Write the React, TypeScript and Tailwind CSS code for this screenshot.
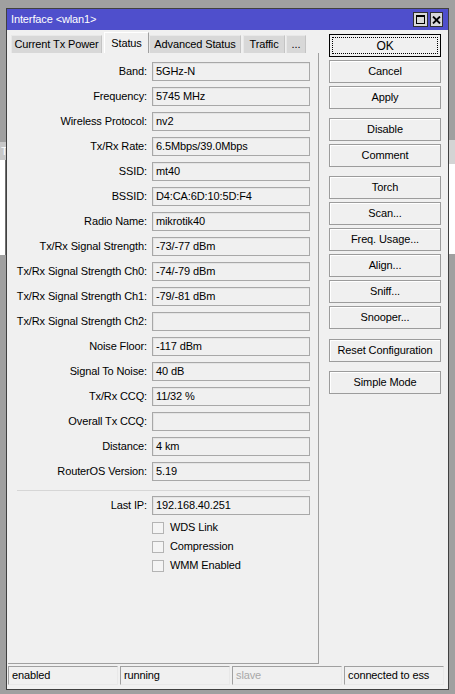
import * as React from "react"

const ROWS: [string, string | null][] = [
  ["Band:", "5GHz-N"],
  ["Frequency:", "5745 MHz"],
  ["Wireless Protocol:", "nv2"],
  ["Tx/Rx Rate:", "6.5Mbps/39.0Mbps"],
  ["SSID:", "mt40"],
  ["BSSID:", "D4:CA:6D:10:5D:F4"],
  ["Radio Name:", "mikrotik40"],
  ["Tx/Rx Signal Strength:", "-73/-77 dBm"],
  ["Tx/Rx Signal Strength Ch0:", "-74/-79 dBm"],
  ["Tx/Rx Signal Strength Ch1:", "-79/-81 dBm"],
  ["Tx/Rx Signal Strength Ch2:", null],
  ["Noise Floor:", "-117 dBm"],
  ["Signal To Noise:", "40 dB"],
  ["Tx/Rx CCQ:", "11/32 %"],
  ["Overall Tx CCQ:", null],
  ["Distance:", "4 km"],
  ["RouterOS Version:", "5.19"],
]

// button groups, separated by a wider gap
const BUTTONS = [
  ["OK", "Cancel", "Apply"],
  ["Disable", "Comment"],
  ["Torch", "Scan...", "Freq. Usage...", "Align...", "Sniff...", "Snooper..."],
  ["Reset Configuration"],
  ["Simple Mode"],
]

function Field({ label, value }: { label: string; value: string | null }) {
  return (
    <div className="flex h-[25px] items-center">
      <div className="w-[139px] text-right">{label}</div>
      <div className="ml-[5px] flex h-[19px] w-[158px] items-center border border-[#a8a8a8] pl-[3px] shadow-[inset_1px_1px_0_#e4e4e4]">
        {value}
      </div>
    </div>
  )
}

function Check({ label }: { label: string }) {
  return (
    <div className="flex h-[19px] items-center pl-[144px]">
      <div className="h-[12px] w-[12px] border border-[#b4b4b4] bg-[#f4f4f4]" />
      <span className="ml-[6px]">{label}</span>
    </div>
  )
}

function Btn({ label }: { label: string }) {
  const ok = label === "OK"
  return (
    <button
      className={
        "flex h-[23px] w-[112px] items-center justify-center bg-[#f0f0f0] p-[2px] " +
        (ok ? "border border-black" : "border border-[#9c9c9c] shadow-[inset_1px_1px_0_#ffffff]")
      }
    >
      <span
        className={
          "flex h-full w-full items-center justify-center " +
          (ok ? "border border-dotted border-black text-[12px]" : "")
        }
      >
        {label}
      </span>
    </button>
  )
}

function Tab({ label, w, active }: { label: string; w: string; active?: boolean }) {
  return (
    <div
      className={
        "flex items-center justify-center " +
        w +
        (active
          ? " h-[21px] border-t border-l border-white border-r border-r-[#a0a0a0] bg-[#f0f0f0]"
          : " h-[18px] border-t border-l border-[#e8e8e8] border-r border-r-[#c4c4c4] bg-[#d8d8d8]")
      }
    >
      {label}
    </div>
  )
}

export default function App() {
  return (
    <div className="relative h-[694px] w-[455px] overflow-hidden bg-[#a0a0a0] font-['Liberation_Sans',Arial,sans-serif] text-[11px] tracking-[-0.12px] text-black">
      {/* bits of the window behind */}
      <div className="absolute top-[142px] left-0 h-[18px] w-[6px] bg-[#c8c8c8] pl-[1px] text-[11px] leading-[18px] text-white">T</div>
      <div className="absolute top-[160px] left-0 h-[95px] w-[6px] border-r border-[#707070] bg-white" />
      <div className="absolute top-[140px] right-0 h-[24px] w-[6px] bg-[#d4d4d4]" />
      <div className="absolute top-[164px] right-0 h-[90px] w-[6px] bg-white" />

      <div className="relative mt-[8px] ml-[6px] flex h-[682px] w-[443px] flex-col border border-[#404040] bg-[#f0f0f0]">
        {/* title bar */}
        <div className="flex h-[21px] items-center bg-[#4f4fcc] pl-[4px] text-[11px] text-white">
          <span className="flex-1">Interface &lt;wlan1&gt;</span>
          <div className="mr-[5px] flex gap-[2px]">
            <div className="flex h-[15px] w-[15px] items-center justify-center border border-[#303030] bg-[#d8d8d8]">
              <div className="h-[9px] w-[9px] border border-t-2 border-black" />
            </div>
            <div className="flex h-[15px] w-[13px] items-center justify-center border border-[#303030] bg-[#d8d8d8]">
              <svg width="9" height="8" viewBox="0 0 9 8">
                <path d="M1 0.5 L8 7.5 M8 0.5 L1 7.5" stroke="black" strokeWidth="1.8" />
              </svg>
            </div>
          </div>
        </div>

        <div className="flex flex-1 pl-[1px]">
          {/* left: tabs + panel */}
          <div className="flex w-[311px] flex-col pt-[2px]">
            <div className="flex h-[21px] items-end pl-[3px]">
              <Tab label="Current Tx Power" w="w-[91px]" />
              <div className="w-[2px]" />
              <Tab label="Status" w="w-[45px]" active />
              <Tab label="Advanced Status" w="w-[92px]" />
              <div className="w-[2px]" />
              <Tab label="Traffic" w="w-[42px]" />
              <div className="w-[1px]" />
              <Tab label="..." w="w-[20px]" />
            </div>
            <div className="flex h-[611px] flex-col border-r border-b border-[#a0a0a0] pt-[6px]">
              {ROWS.map(([l, v]) => (
                <Field key={l} label={l} value={v} />
              ))}
              <div className="mt-[6px] ml-[9px] h-px w-[293px] bg-[#d6d6d6]" />
              <div className="mt-[2px]">
                <Field label="Last IP:" value="192.168.40.251" />
              </div>
              <Check label="WDS Link" />
              <Check label="Compression" />
              <Check label="WMM Enabled" />
            </div>
          </div>

          {/* right: buttons */}
          <div className="ml-[10px] flex flex-col gap-[9px] pt-[4px]">
            {BUTTONS.map((g, i) => (
              <div key={i} className={"flex flex-col gap-[3px] " + (i === 3 ? "mt-[1px]" : "")}>
                {g.map((b) => (
                  <Btn key={b} label={b} />
                ))}
              </div>
            ))}
          </div>
        </div>

        {/* status bar */}
        <div className="mb-[4px] flex gap-[2px] pl-[1px]">
          {[
            ["enabled", "w-[110px]", ""],
            ["running", "w-[110px]", ""],
            ["slave", "w-[110px]", "text-[#a8a8a8]"],
            ["connected to ess", "w-[100px]", ""],
          ].map(([t, w, c]) => (
            <div
              key={t}
              className={"flex h-[19px] items-center border-t border-l border-[#a0a0a0] border-r border-b border-r-[#e8e8e8] border-b-[#e8e8e8] pl-[3px] " + w + " " + c}
            >
              {t}
            </div>
          ))}
        </div>
      </div>
    </div>
  )
}
